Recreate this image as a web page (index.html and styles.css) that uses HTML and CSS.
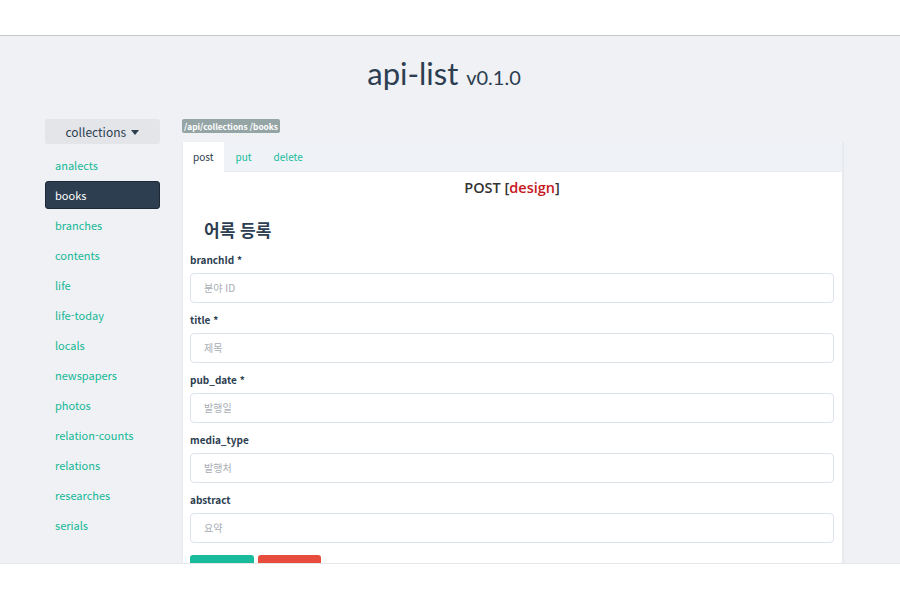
FILE: index.html
```html
<!DOCTYPE html>
<html lang="ko">
<head>
<meta charset="utf-8">
<title>api-list</title>
<link rel="stylesheet" href="styles.css">
</head>
<body>
<div class="frame">
  <div class="container">
    <header class="header">
      <h1 class="title">api-list <small class="version">v0.1.0</small></h1>
    </header>
    <div class="layout">
      <aside class="sidebar">
        <div class="dropdown">collections <span class="caret"></span></div>
        <ul class="nav">
          <li class="nav-item">analects</li>
          <li class="nav-item active">books</li>
          <li class="nav-item">branches</li>
          <li class="nav-item">contents</li>
          <li class="nav-item">life</li>
          <li class="nav-item">life-today</li>
          <li class="nav-item">locals</li>
          <li class="nav-item">newspapers</li>
          <li class="nav-item">photos</li>
          <li class="nav-item">relation-counts</li>
          <li class="nav-item">relations</li>
          <li class="nav-item">researches</li>
          <li class="nav-item">serials</li>
        </ul>
      </aside>
      <main class="main">
        <div class="badge">/api/collections /books</div>
        <section class="panel">
          <div class="tabs">
            <span class="tab active">post</span>
            <span class="tab">put</span>
            <span class="tab">delete</span>
          </div>
          <div class="panel-body">
            <h2 class="method">POST [<span class="design">design</span>]</h2>
            <h3 class="form-title">어록 등록</h3>
            <div class="field">
              <label class="label">branchId *</label>
              <div class="input">분야 ID</div>
            </div>
            <div class="field">
              <label class="label">title *</label>
              <div class="input">제목</div>
            </div>
            <div class="field">
              <label class="label">pub_date *</label>
              <div class="input">발행일</div>
            </div>
            <div class="field">
              <label class="label">media_type</label>
              <div class="input">발행처</div>
            </div>
            <div class="field">
              <label class="label">abstract</label>
              <div class="input">요약</div>
            </div>
            <div class="buttons">
              <span class="btn btn-success"></span>
              <span class="btn btn-danger"></span>
            </div>
          </div>
        </section>
      </main>
    </div>
  </div>
</div>
</body>
</html>
```
FILE: styles.css
```css
html, body {
  margin: 0;
  padding: 0;
  background: #ffffff;
}
body {
  font-family: "Noto Sans CJK KR", "Noto Sans", sans-serif;
  color: #2c3e50;
}
.frame {
  margin-top: 35px;
  height: 527px;
  border-top: 1px solid #c9c9c9;
  border-bottom: 1px solid #e6e7ea;
  background: #eff1f5;
  overflow: hidden;
}
.container {
  margin-left: 45px;
  width: 798px;
}
.header {
  padding-top: 17px;
  height: 40px;
  text-align: center;
}
.title {
  margin: 0;
  font-family: Lato, sans-serif;
  font-weight: 400;
  font-size: 31px;
  line-height: 40px;
  color: #2c3e50;
}
.version {
  font-size: 20px;
}
.layout {
  display: flex;
  gap: 22px;
  margin-top: 26px;
}
.sidebar {
  width: 115px;
  flex: none;
}
.dropdown {
  height: 25px;
  line-height: 25px;
  background: #e3e5e9;
  border-radius: 3px;
  text-align: center;
  font-size: 12px;
  color: #2c3e50;
}
.caret {
  display: inline-block;
  width: 0;
  height: 0;
  border-left: 4px solid transparent;
  border-right: 4px solid transparent;
  border-top: 5px solid #2c3e50;
  vertical-align: 2px;
  margin-left: 2px;
}
.nav {
  list-style: none;
  margin: 7px 0 0;
  padding: 0;
}
.nav-item {
  height: 28px;
  line-height: 28px;
  margin-bottom: 2px;
  padding-left: 10px;
  font-size: 11px;
  color: #15b896;
  border-radius: 3px;
  box-sizing: border-box;
}
.nav-item.active {
  background: #2c3e50;
  color: #ffffff;
  border: 1px solid #1d2a36;
  padding-left: 9px;
  line-height: 26px;
}
.main {
  width: 661px;
  flex: none;
}
.badge {
  width: max-content;
  height: 14px;
  line-height: 14px;
  padding: 0 2px;
  background: #95a5a6;
  color: #ffffff;
  font-size: 8.3px;
  font-weight: 700;
  border-radius: 2px;
}
.panel {
  margin-top: 9px;
  background: #ffffff;
  border: 1px solid #e8ebf0;
  border-top: none;
  box-shadow: 1px 0 1px rgba(0,0,0,0.03);
}
.tabs {
  display: flex;
  gap: 2px;
  height: 30px;
  background: #eff2f7;
  border-bottom: 1px solid #e9ecf1;
  box-sizing: border-box;
}
.tab {
  height: 30px;
  line-height: 30px;
  padding: 0 10px;
  font-size: 10px;
  color: #18bc9c;
}
.tab.active {
  background: #ffffff;
  color: #2c3e50;
}
.panel-body {
  padding: 6px 8px 0 7px;
  height: 400px;
}
.method {
  margin: 0;
  text-align: center;
  font-family: "Open Sans", sans-serif;
  font-weight: 600;
  font-size: 14.5px;
  line-height: 20px;
  color: #333333;
}
.design {
  color: #c5171d;
}
.form-title {
  margin: 20px 0 0 14px;
  font-size: 17px;
  line-height: 24px;
  font-weight: 700;
  color: #2c3e50;
}
.field {
  margin-top: 11px;
}
.field + .field {
  margin-top: 10px;
}
.label {
  display: block;
  font-size: 10px;
  line-height: 14px;
  font-weight: 700;
  color: #2c3e50;
}
.input {
  margin-top: 6px;
  width: 644px;
  height: 30px;
  box-sizing: border-box;
  border: 1.5px solid #dde3ea;
  border-radius: 4px;
  padding-left: 13px;
  line-height: 27px;
  font-size: 10px;
  color: #a7adb5;
}
.buttons {
  display: flex;
  gap: 4px;
  margin-top: 12px;
}
.btn {
  display: block;
  width: 64px;
  height: 30px;
  border-radius: 3px;
}
.btn-success {
  background: #18bc9c;
}
.btn-danger {
  width: 63px;
  background: #e74c3c;
}
```
